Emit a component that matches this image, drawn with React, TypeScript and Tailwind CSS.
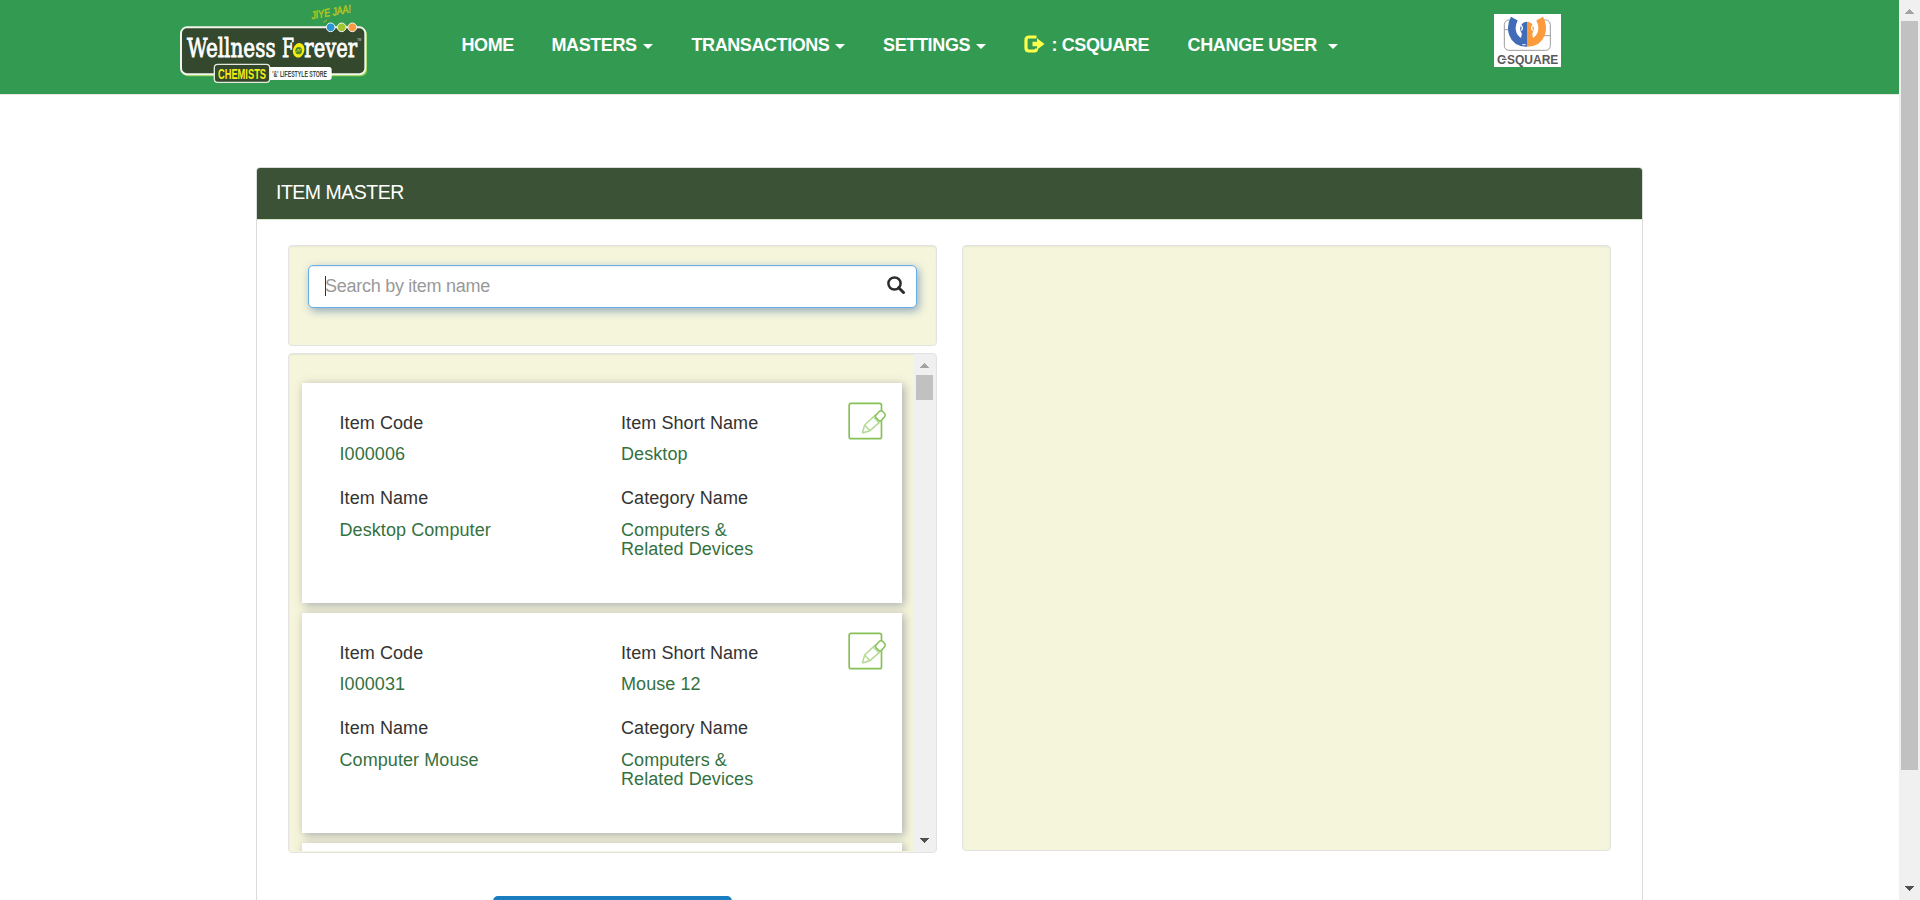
import React from "react";

type NavEntry = { label: string; className: string; caret?: string; icon?: boolean };

const navEntries: NavEntry[] = [
  { label: "HOME", className: "w-[90px] tracking-[-0.4px]" },
  { label: "MASTERS", className: "w-[140px] tracking-[-0.42px]", caret: "ml-[6px]" },
  { label: "TRANSACTIONS", className: "w-[191.500px] tracking-[-0.42px]", caret: "ml-[6px]" },
  { label: "SETTINGS", className: "w-[140.500px] tracking-[-0.35px]", caret: "ml-[6px]" },
  { label: ": CSQUARE", className: "w-[164px] tracking-[-0.38px]", icon: true },
  { label: "CHANGE USER", className: "w-[200px] tracking-[-0.32px]", caret: "ml-[11px]" },
];

const items = [
  { code: "I000006", short: "Desktop", name: "Desktop Computer", category: "Computers & Related Devices" },
  { code: "I000031", short: "Mouse 12", name: "Computer Mouse", category: "Computers & Related Devices" },
];

function WellnessLogo() {
  return (
    <svg className="block h-[94px] w-[210px] shrink-0" viewBox="0 0 630 282">
      <rect x="36" y="86" width="555" height="143" rx="18" fill="#8ed04a" />
      <rect x="33" y="82" width="553" height="141" rx="18" fill="#33482c" stroke="#f1f5ec" strokeWidth="6" />
      <g fontFamily="DejaVu Serif, serif" fontSize="80" fill="#fff" stroke="#fff" strokeWidth="2.500">
        <text x="51" y="172" textLength="266" lengthAdjust="spacingAndGlyphs">Wellness</text>
        <text x="336" y="172" textLength="36" lengthAdjust="spacingAndGlyphs">F</text>
        <text x="403" y="172" textLength="158" lengthAdjust="spacingAndGlyphs">rever</text>
      </g>
      <ellipse cx="386" cy="151" rx="17" ry="22" fill="#f3ee10" transform="rotate(15 386 151)" />
      <ellipse cx="386" cy="152" rx="10" ry="11" fill="#4c8a34" />
      <path d="M379 156l6-9 2 7 6-7" stroke="#e8e81a" strokeWidth="2" fill="none" />
      <text x="561" y="122" textLength="13" lengthAdjust="spacingAndGlyphs" fontFamily="Liberation Sans, sans-serif" fontSize="9" fill="#ddd">TM</text>
      <rect x="290" y="201" width="195" height="39" rx="8" fill="#fff" />
      <rect x="133" y="193" width="166" height="54" rx="10" fill="#33482c" stroke="#e5eadf" strokeWidth="4" />
      <text x="144" y="236" textLength="144" lengthAdjust="spacingAndGlyphs" fontFamily="Liberation Sans, sans-serif" fontWeight="bold" fontSize="46" fill="#f5ee14">CHEMISTS</text>
      <text x="307" y="230" textLength="164" lengthAdjust="spacingAndGlyphs" fontFamily="Liberation Sans, sans-serif" fontWeight="bold" fontSize="26" fill="#3d4a38">'&amp;' LIFESTYLE STORE</text>
      <circle cx="482" cy="82" r="13" fill="#2b95d8" stroke="#f1f5ec" strokeWidth="3" />
      <circle cx="515" cy="82" r="13" fill="#a2c42d" stroke="#f1f5ec" strokeWidth="3" />
      <circle cx="547" cy="82" r="13" fill="#fb9a45" stroke="#f1f5ec" strokeWidth="3" />
      <path d="M460 67l12-8" stroke="#a8b822" strokeWidth="3" />
      <text x="426" y="58" textLength="120" lengthAdjust="spacingAndGlyphs" transform="rotate(-10 426 58)" fontFamily="Liberation Sans, sans-serif" fontStyle="italic" fontSize="33" fill="#b9c41e" stroke="#b9c41e" strokeWidth="1.500">JIYE JAA!</text>
    </svg>
  );
}

function CsquareLogo() {
  return (
    <svg className="mt-[14px] block h-[53px] w-[67px] shrink-0 bg-white" viewBox="0 0 201 159">
      <g fill="none" stroke="#9d9d9d" strokeWidth="3">
        <rect x="31" y="18" width="138" height="91" rx="14" />
        <path d="M31 47h24M145 65h24" />
      </g>
      <path d="M99 14A46 46 0 0 0 64 12V60L99 90L134 60V12A46 46 0 0 0 99 14" fill="#fff" />
      <path d="M61 14C46 42 52 86 99 87" fill="none" stroke="#416cb8" strokeWidth="23" />
      <path d="M137 14C152 42 146 86 99 87" fill="none" stroke="#fb9b3c" strokeWidth="23" />
      <path d="M99 23A21 21 0 0 0 81 54Q85 59 82 67L80 85L99 92z" fill="#416cb8" />
      <path d="M99 23A21 21 0 0 1 117 54Q113 59 116 67L118 85L99 92z" fill="#fb9b3c" />
      <path d="M80 33q9 7 2 17" fill="none" stroke="#fff" strokeWidth="4" />
      <path d="M118 33q-9 7-2 17" fill="none" stroke="#fff" strokeWidth="4" />
      <path d="M85 92h10" stroke="#fff" strokeWidth="3" />
      <text x="9" y="150" textLength="27" lengthAdjust="spacingAndGlyphs" fontFamily="Liberation Sans, sans-serif" fontWeight="bold" fontSize="40" fill="#58595b">C</text>
      <path d="M24 136h14" stroke="#58595b" strokeWidth="4" />
      <text x="39" y="150" textLength="154" lengthAdjust="spacingAndGlyphs" fontFamily="Liberation Sans, sans-serif" fontWeight="bold" fontSize="40" fill="#58595b">SQUARE</text>
    </svg>
  );
}

function Caret({ className }: { className: string }) {
  return (
    <svg className={`inline-block h-[5px] w-[10px] ${className}`} viewBox="0 0 10 5">
      <path d="M0 0h10L5 5z" fill="#fff" />
    </svg>
  );
}

function LogoutIcon() {
  return (
    <svg className="-mt-[3px] mr-[7px] h-[18px] w-[21px]" viewBox="0 0 21 18">
      <path d="M12.500 2H5Q2 2 2 5v8q0 3 3 3h5.500q2 0 2-2.500" fill="none" stroke="#ffff4a" strokeWidth="3.200" />
      <path d="M8.500 6.700H13V3.200L20.500 9 13 14.800v-3.500H8.500z" fill="#ffff4a" />
    </svg>
  );
}

function SearchIcon() {
  return (
    <svg className="mb-[3px] h-[18px] w-[18px]" viewBox="0 0 18 18">
      <circle cx="7.500" cy="7.500" r="6.100" fill="none" stroke="#2d2d2d" strokeWidth="2.500" />
      <path d="M11.700 11.700l4.800 4.800" stroke="#2d2d2d" strokeWidth="3" strokeLinecap="round" />
    </svg>
  );
}

function EditIcon() {
  return (
    <svg className="block h-[38px] w-[38px]" viewBox="0 0 114 114" fill="none">
      <rect x="3.500" y="4" width="97" height="106" rx="6" stroke="#85c156" strokeWidth="5" />
      <path d="M86 38L51 70 42 94 66 86 101 54z" fill="#fff" />
      <path d="M43 93l7-24 34-32M101 55L66 86 43 93M50 69l16 17M76 45l17 17" stroke="#b3da94" strokeWidth="4.500" strokeLinejoin="round" />
      <path d="M85 38l8-9q6-5 12 0l4 5q5 5 0 11l-9 10q-5 3-9-1l-6-6q-5-5 0-10z" fill="#fff" stroke="#85c156" strokeWidth="4.500" />
    </svg>
  );
}

function ScrollArrow({ up = false }: { up?: boolean }) {
  return (
    <svg className="block h-[5px] w-[9px]" viewBox="0 0 9 5" shapeRendering="crispEdges">
      {up ? <path d="M0 5h9L4.500 0z" fill="#a3a3a3" /> : <path d="M0 0h9L4.500 5z" fill="#505050" />}
    </svg>
  );
}

function Field({ label, value, valueClass }: { label: string; value: string; valueClass: string }) {
  return (
    <div className="text-[18px] leading-[19px] tracking-[0.08px]">
      <div className="text-[#333]">{label}</div>
      <div className={`text-[#34713f] ${valueClass}`}>{value}</div>
    </div>
  );
}

const cardShadow = "shadow-[3px_3px_8px_rgba(150,155,168,0.5),1px_1px_9px_rgba(0,0,0,0.14)]";

function ItemCard({ item }: { item: (typeof items)[number] }) {
  return (
    <div
      className={`relative grid h-[220px] w-[600px] shrink-0 grid-cols-[281.500px_1fr] grid-rows-[75px_1fr] bg-white pt-[31px] pl-[37.500px] ${cardShadow}`}
    >
      <Field label="Item Code" value={item.code} valueClass="mt-[12px]" />
      <Field label="Item Short Name" value={item.short} valueClass="mt-[12px]" />
      <Field label="Item Name" value={item.name} valueClass="mt-[13px]" />
      <Field label="Category Name" value={item.category} valueClass="mt-[13px] w-[150px]" />
      <div className="absolute top-[19px] right-[16px]">
        <EditIcon />
      </div>
    </div>
  );
}

const well = "rounded-[4px] border border-[#e3e3e3] bg-[#f5f5dc] shadow-[inset_0_1px_2px_rgba(0,0,0,0.06)]";

export default function App() {
  return (
    <div className="flex h-[900px] w-[1920px] overflow-hidden bg-white font-['Liberation_Sans',Arial,sans-serif]">
      <div className="w-[1899px] shrink-0">
        <header className="flex h-[95px] border-b border-[#e7e7e7] bg-[#329a51] pl-[170px]">
          <WellnessLogo />
          <nav className="mt-[33px] ml-[81.500px] flex h-[24px] w-[1032.500px] shrink-0 text-[18px] leading-[24px] font-bold text-white">
            {navEntries.map((n) => (
              <a key={n.label} className={`flex shrink-0 items-center whitespace-nowrap ${n.className}`}>
                {n.icon && <LogoutIcon />}
                {n.label}
                {n.caret && <Caret className={`mt-[3px] ${n.caret}`} />}
              </a>
            ))}
          </nav>
          <CsquareLogo />
        </header>

        <main className="mt-[72px] ml-[256px] h-[900px] w-[1387px] rounded-[4px] border border-[#d9dcd9]">
          <h1 className="h-[52px] rounded-t-[3px] border-b border-[#d6e9c6] bg-[#3c5236] pt-[13px] pl-[19px] text-[19.500px] leading-[22px] tracking-[-0.5px] text-white">
            ITEM MASTER
          </h1>
          <div className="flex gap-[25px] pt-[25px] pl-[31px]">
            <section className="w-[649px]">
              <div className={`h-[101px] p-[19px] ${well}`}>
                <div className="flex h-[43px] items-center justify-between rounded-[5px] border border-[#66afe9] bg-white pr-[11px] pl-[16px] shadow-[inset_0_1px_1px_rgba(0,0,0,0.075),2px_3px_9px_rgba(80,120,165,0.6)]">
                  <div className="flex items-center pb-[2px] text-[18px] leading-[20px] tracking-[-0.27px] text-[#999]">
                    <span className="-mr-px h-[20px] w-px bg-[#333]" />
                    Search by item name
                  </div>
                  <SearchIcon />
                </div>
              </div>
              <div className={`mt-[7px] flex h-[500px] justify-between overflow-hidden pr-px pb-px ${well}`}>
                <div className="flex w-[625px] flex-col gap-[10px] overflow-hidden pt-[29px] pl-[13px]">
                  {items.map((item) => (
                    <ItemCard key={item.code} item={item} />
                  ))}
                  <div className={`h-[220px] w-[600px] shrink-0 bg-white ${cardShadow}`} />
                </div>
                <div className="flex h-[498px] w-[21px] flex-col items-center bg-[#f0f0f0] pt-[9px] pb-[9px]">
                  <ScrollArrow up />
                  <div className="mt-[7px] mb-auto h-[25px] w-[17px] bg-[#c1c1c1]" />
                  <ScrollArrow />
                </div>
              </div>
              <button className="mt-[43px] ml-[205px] block h-[44px] w-[239px] rounded-[5px] bg-[#187dc1]" />
            </section>
            <section className={`h-[606px] w-[649px] ${well}`} />
          </div>
        </main>
      </div>
      <div className="flex h-[900px] w-[21px] flex-col items-center bg-[#f0f0f0] pt-[9px] pb-[9px]">
        <ScrollArrow up />
        <div className="mt-[7px] mb-auto h-[749px] w-[17px] shrink-0 bg-[#c1c1c1]" />
        <ScrollArrow />
      </div>
    </div>
  );
}
